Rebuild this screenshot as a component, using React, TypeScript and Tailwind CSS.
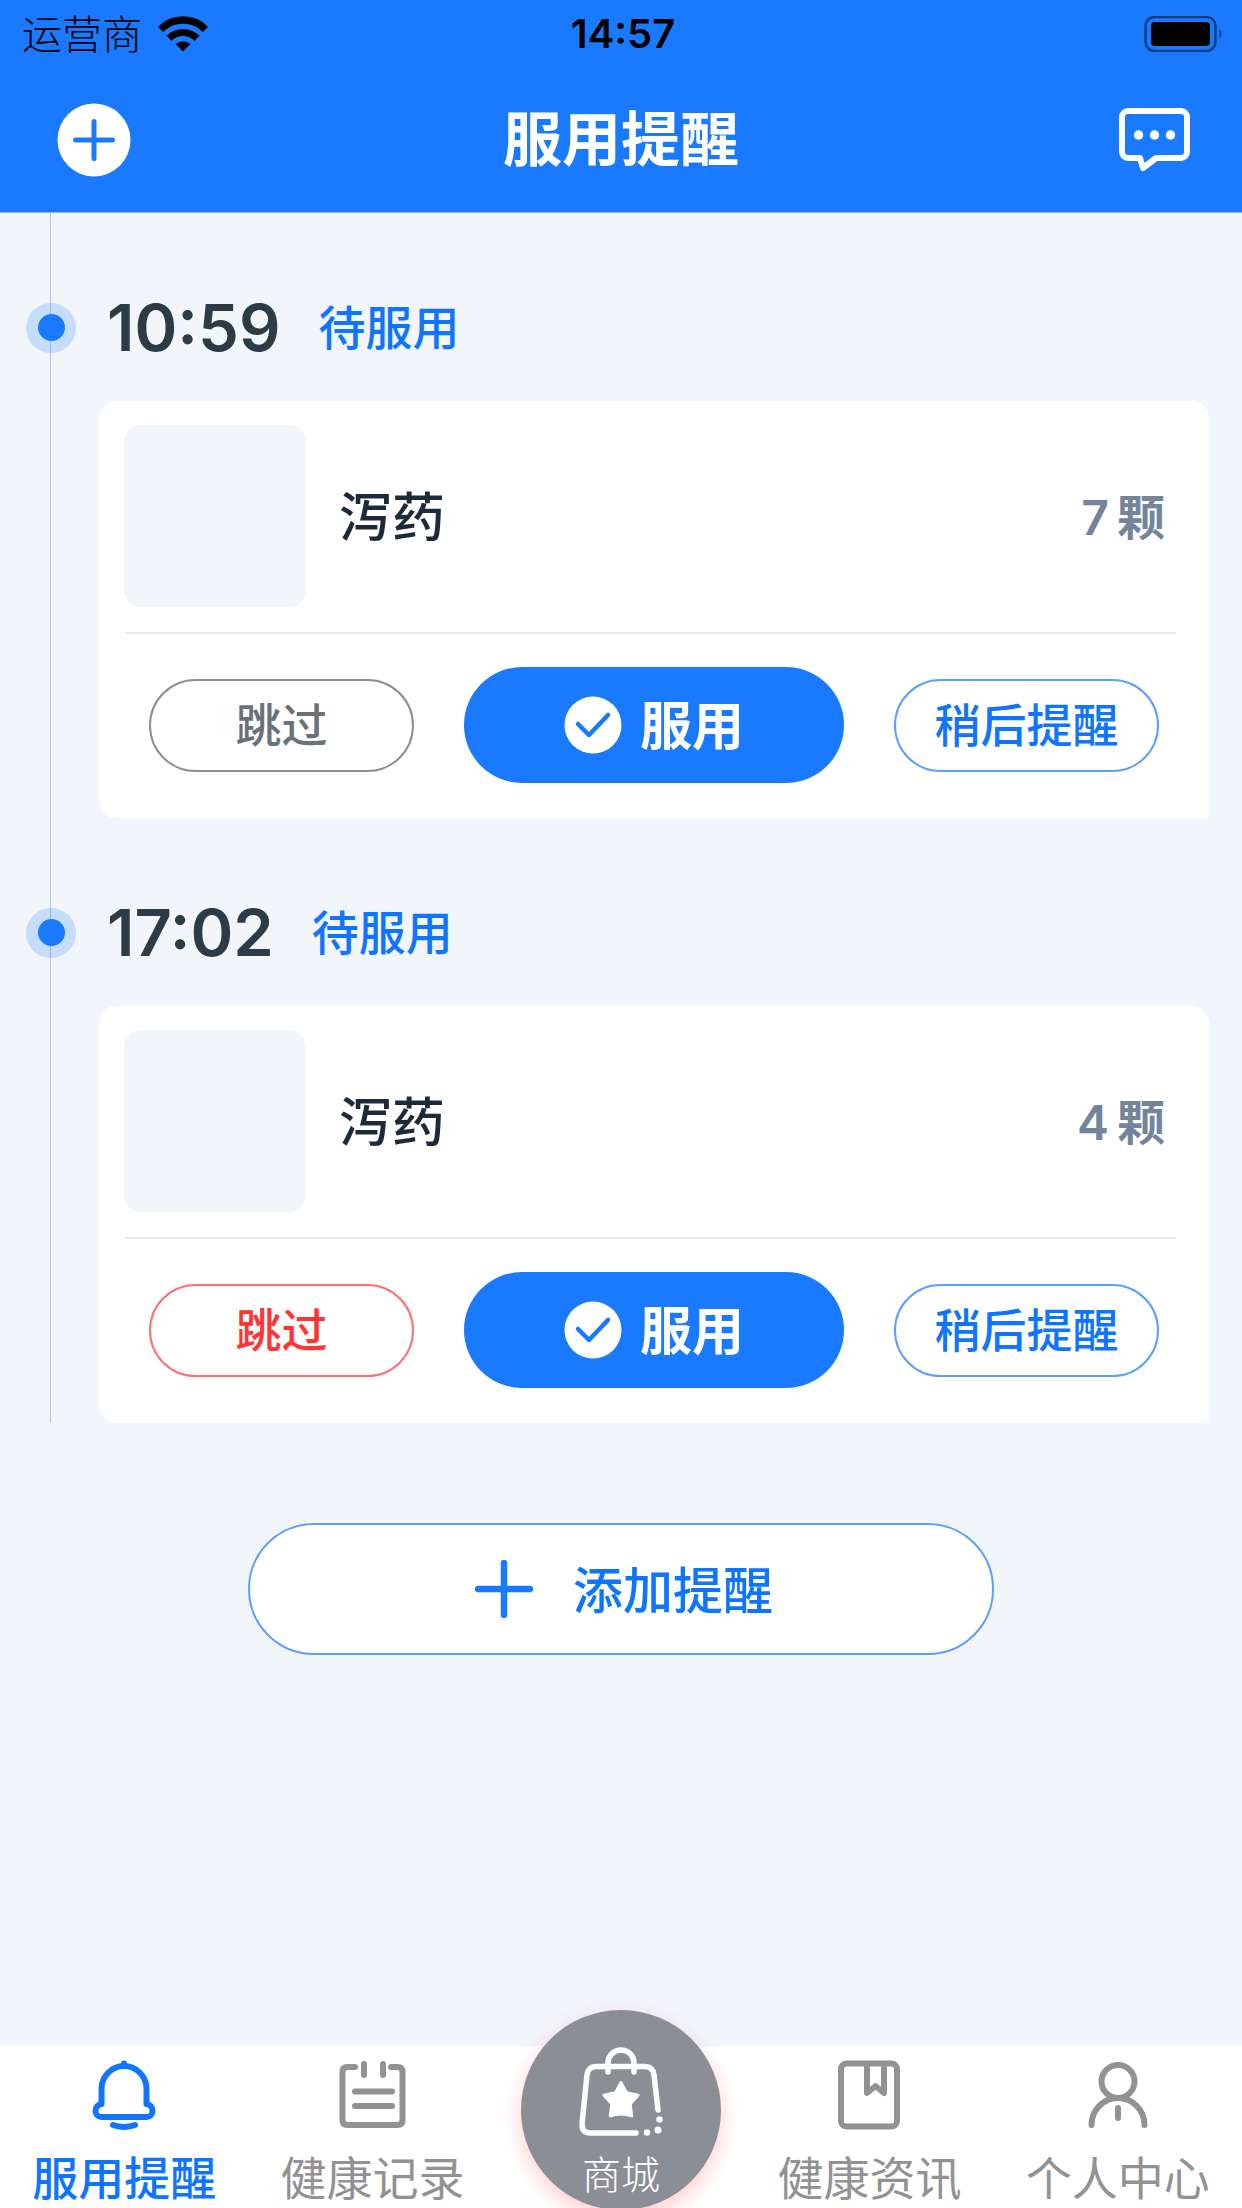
import React from 'react';

interface Reminder {
  id: number;
  time: string;
  status: string;
  name: string;
  amount: number;
  unit: string;
  overdue: boolean;
}

const reminders: Reminder[] = [
  { id: 1, time: '10:59', status: '待服用', name: '泻药', amount: 7, unit: '颗', overdue: false },
  { id: 2, time: '17:02', status: '待服用', name: '泻药', amount: 4, unit: '颗', overdue: true },
];

const WifiIcon: React.FC = () => (
  <svg className="h-9 w-[50px]" viewBox="0 0 50 36" fill="none" stroke="currentColor">
    <path strokeWidth={7.5} d="M2.5 13.5a31.5 31.5 0 0 1 45 0" />
    <path strokeWidth={7} d="M11 22.2a19.8 19.8 0 0 1 28 0" />
    <path stroke="none" fill="currentColor" d="M25 35.5l-7.3-7.2a10.3 10.3 0 0 1 14.6 0z" />
  </svg>
);

const BatteryIcon: React.FC = () => (
  <svg className="h-9 w-20" viewBox="0 0 80 36" fill="none">
    <rect x="1.5" y="1" width="70" height="34" rx="9" stroke="#000" strokeOpacity={0.5} strokeWidth={2.5} />
    <rect x="7" y="6" width="59" height="24" rx="4" fill="#000" />
    <path d="M75.5 12.5q4 5.500 0 11z" fill="#000" fillOpacity={0.5} />
  </svg>
);

const ChatIcon: React.FC = () => (
  <svg className="h-16 w-[72px]" viewBox="0 0 72 64" fill="none" stroke="currentColor">
    <path strokeWidth={6} strokeLinejoin="round"
      d="M9 3h53a6 6 0 0 1 6 6v35a6 6 0 0 1-6 6H37L24 60l-3-10H9a6 6 0 0 1-6-6V9a6 6 0 0 1 6-6z" />
    <g fill="currentColor" stroke="none">
      <circle cx="19.500" cy="27" r="4.700" />
      <circle cx="35.500" cy="27" r="4.700" />
      <circle cx="51.500" cy="27" r="4.700" />
    </g>
  </svg>
);

const BellIcon: React.FC = () => (
  <svg className="h-[70px] w-[70px]" viewBox="0 0 70 70" fill="none" stroke="currentColor"
    strokeWidth={6} strokeLinecap="round" strokeLinejoin="round">
    <path d="M12.500 44V29a22.500 23 0 0 1 45 0v15c8 1 8 13 0 13h-45c-8 0-8-12 0-13z" />
    <path d="M35 3.500v2M24 65q11 4 22 0" />
  </svg>
);

const RecordIcon: React.FC = () => (
  <svg className="h-[70px] w-[70px]" viewBox="0 0 70 70" fill="none" stroke="currentColor"
    strokeWidth={6} strokeLinecap="round" strokeLinejoin="round">
    <path d="M17 7H9.500Q4.500 7 4.500 12v48q0 5 5 5h50q5 0 5-5V12q0-5-5-5H53" />
    <path d="M26 4v11M45 4v11M17 31.500h37M17 46h37" />
  </svg>
);

const NewsIcon: React.FC = () => (
  <svg className="h-[70px] w-[70px]" viewBox="0 0 70 70" fill="none" stroke="currentColor"
    strokeWidth={6} strokeLinecap="round" strokeLinejoin="round">
    <rect x="7" y="3.500" width="56" height="63" rx="5.500" />
    <path d="M33 4v29l8.500-7 8.500 7V4" />
  </svg>
);

const UserIcon: React.FC = () => (
  <svg className="h-[70px] w-[70px]" viewBox="0 0 70 70" fill="none" stroke="currentColor"
    strokeWidth={6} strokeLinecap="round">
    <circle cx="35" cy="21.500" r="16.500" />
    <path d="M8.500 65a26.500 27 0 0 1 53 0M35 48v10" />
  </svg>
);

const BagIcon: React.FC = () => (
  <svg className="h-[90px] w-[84px]" viewBox="0 0 84 90" fill="none" stroke="currentColor"
    strokeWidth={5.5} strokeLinecap="round" strokeLinejoin="round">
    <path d="M29 25v-9a13 13 0 0 1 26 0v9" />
    <path d="M57 86H11q-8 0-8-9l5-49q1-8.500 9-8.500h49q8 0 9 8.500l4 35" />
    <g fill="currentColor" stroke="none">
      <circle cx="80.500" cy="72.500" r="3.200" />
      <circle cx="79" cy="83" r="3.500" />
      <circle cx="68" cy="85.500" r="3.200" />
    </g>
    <path fill="currentColor" strokeWidth={3}
      d="M42 35.500l5.500 10.300 11.500 2.400-7.800 8.700 1.500 12q-10.700-4-21.400 0l1.500-12L25 48.200l11.500-2.400z" />
  </svg>
);

const tabs = [
  { label: '服用提醒', icon: <BellIcon />, active: true },
  { label: '健康记录', icon: <RecordIcon />, active: false },
  null,
  { label: '健康资讯', icon: <NewsIcon />, active: false },
  { label: '个人中心', icon: <UserIcon />, active: false },
];

const ReminderItem: React.FC<{ reminder: Reminder }> = ({ reminder }) => (
  <li>
    <div className="flex h-[188px] items-center pt-[41px] pl-[26px]">
      <span className="relative flex h-[50px] w-[50px] items-center justify-center rounded-full bg-[#1a7aff]/20">
        <span className="h-[27px] w-[27px] rounded-full bg-[#1a7aff]" />
      </span>
      <time className="ml-[31px] text-[65px] leading-none font-semibold text-[#2d3b47]">{reminder.time}</time>
      <span className="ml-[38px] text-[47px] leading-none font-medium text-[#0f75ff]">{reminder.status}</span>
    </div>

    <article className="mr-[33px] ml-[99px] rounded-[17px] rounded-br-none bg-white pt-6 pb-[35px]">
      <div className="flex items-center pr-11 pl-[25px]">
        <div className="h-[182px] w-[182px] rounded-[17px] bg-[#f2f5fa]" />
        <h2 className="ml-[33px] flex-1 pt-1 text-[53px] leading-none font-medium text-[#1c2a3a]">{reminder.name}</h2>
        <p className="flex items-center gap-2 pt-1 text-[48px] leading-none font-semibold text-[#73849c]">
          <span>{reminder.amount}</span>
          <span className="font-bold">{reminder.unit}</span>
        </p>
      </div>
      <hr className="mt-[25px] mr-[33px] ml-[26px] border-t-2 border-[#e3e9f0]" />
      <div className="mt-[33px] flex items-center gap-[50px] px-[50px] text-[46px] leading-none">
        <button
          className={
            reminder.overdue
              ? 'h-[93px] flex-[264] rounded-full border-2 border-[#ff7070] font-medium text-[#ff3535]'
              : 'h-[93px] flex-[264] rounded-full border-2 border-[#8b9096] font-medium text-[#6a7178]'
          }
        >
          跳过
        </button>
        <button className="flex h-[116px] flex-[385] items-center justify-center gap-[18px] rounded-full bg-[#1a7aff] text-[52px] font-bold text-white">
          <svg className="h-[58px] w-[58px]" viewBox="0 0 58 58" fill="none">
            <circle cx="29" cy="29" r="28.5" fill="#fff" />
            <path d="M14 28l11 11 19-20" stroke="#1a7aff" strokeWidth={4.5} strokeLinecap="round" strokeLinejoin="round" />
          </svg>
          <span className="pt-1">服用</span>
        </button>
        <button className="h-[93px] flex-[264] rounded-full border-2 border-[#5c9fff] font-medium text-[#0f75ff]">
          稍后提醒
        </button>
      </div>
    </article>
  </li>
);

export default function App() {
  return (
    <div className="relative flex min-h-screen flex-col overflow-hidden bg-[#f2f5fa] font-['Inter','Noto_Sans_CJK_SC',sans-serif]">
      <header className="h-[213px] border-b border-[#a3b4cc] bg-[#1a7aff]">
        {/* Status bar */}
        <div className="grid h-[67px] grid-cols-3 items-center pr-[18px] pl-[22px] text-black">
          <div className="flex items-center gap-4">
            <span className="pt-0.5 text-[40px] leading-none font-light">运营商</span>
            <WifiIcon />
          </div>
          <span className="text-center text-[40px] leading-none font-semibold">14:57</span>
          <div className="flex justify-end">
            <BatteryIcon />
          </div>
        </div>

        {/* Title bar */}
        <div className="grid h-[145px] grid-cols-3 items-center px-[51px] text-white">
          <button aria-label="添加" className="justify-self-start pl-1.5">
            <svg className="h-[74px] w-[74px]" viewBox="0 0 74 74" fill="none">
              <circle cx="37" cy="37" r="36.5" fill="#fff" />
              <path d="M37 18.500v37M18.500 37h37" stroke="#1a7aff" strokeWidth={5} strokeLinecap="round" />
            </svg>
          </button>
          <h1 className="justify-self-center text-[59px] leading-none font-bold whitespace-nowrap">服用提醒</h1>
          <button aria-label="消息" className="justify-self-end">
            <ChatIcon />
          </button>
        </div>
      </header>

      <main className="flex flex-1 flex-col">
        <div className="relative">
          <div className="absolute inset-y-0 left-[50px] w-px bg-[#b5c5d8]" />
          <ul>
            {reminders.map((r) => (
              <ReminderItem key={r.id} reminder={r} />
            ))}
          </ul>
        </div>

        <button className="mx-auto mt-[100px] flex h-[132px] w-3/5 items-center justify-center gap-10 rounded-full border-2 border-[#5c9fff] bg-white pl-1.5 text-[50px] leading-none font-medium text-[#0f75ff]">
          <svg className="h-[58px] w-[58px]" viewBox="0 0 58 58" fill="none" stroke="#1a7aff">
            <path d="M29 3v52M3 29h52" strokeWidth={6.5} strokeLinecap="round" />
          </svg>
          <span className="pt-1">添加提醒</span>
        </button>
      </main>

      {/* Bottom tabs */}
      <nav className="grid h-[162px] grid-cols-5 bg-white text-[46px] leading-none">
        {tabs.map((tab) =>
          tab ? (
            <a
              key={tab.label}
              href="#"
              className={
                tab.active
                  ? 'flex flex-col items-center gap-[25px] pt-[14px] font-medium text-[#0f75ff]'
                  : 'flex flex-col items-center gap-[25px] pt-[14px] text-[#929292]'
              }
            >
              {tab.icon}
              <span>{tab.label}</span>
            </a>
          ) : (
            <div key="mall" className="relative flex justify-center">
              <a
                href="#"
                className="absolute -top-9 flex h-[200px] w-[200px] flex-col items-center gap-[18px] rounded-full bg-[#8c8e95] pt-[37px] text-[39px] font-light text-white shadow-[0_8px_20px_rgba(255,90,90,0.3)]"
              >
                <BagIcon />
                <span>商城</span>
              </a>
            </div>
          ),
        )}
      </nav>
    </div>
  );
}
